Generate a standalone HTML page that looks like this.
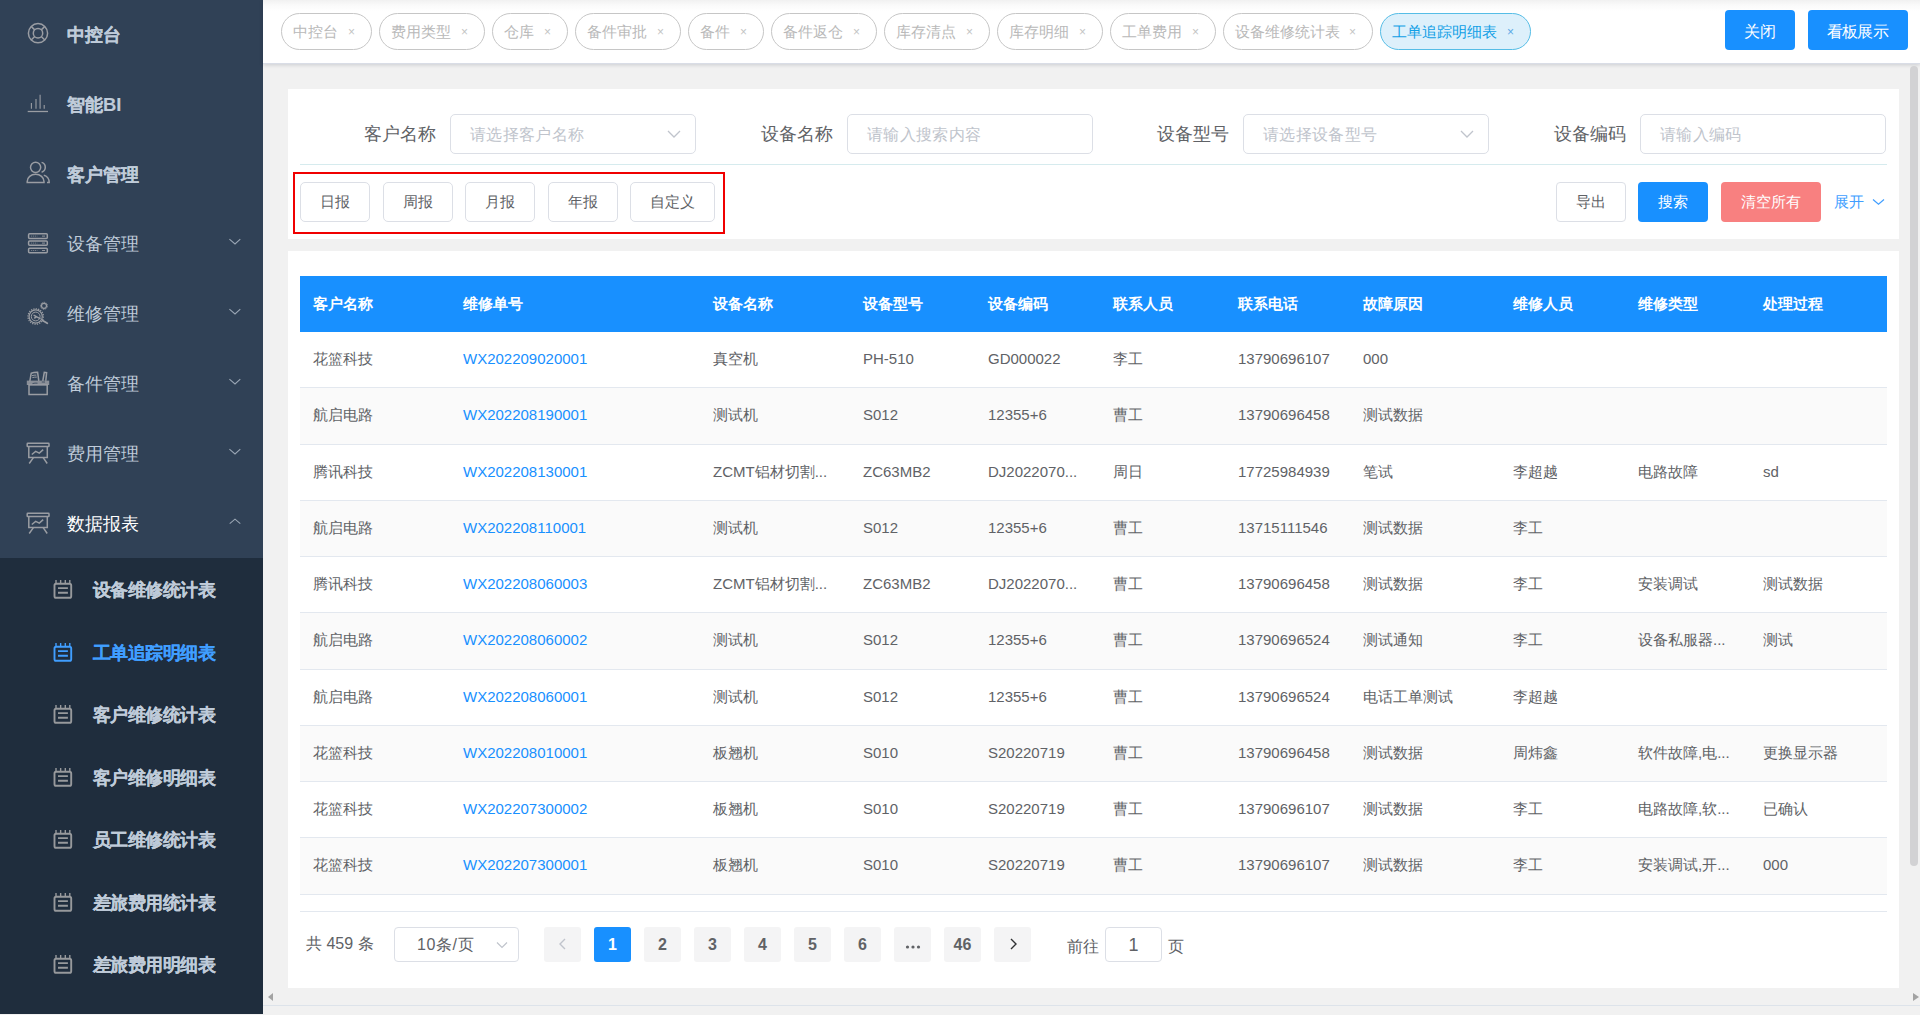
<!DOCTYPE html>
<html><head><meta charset="utf-8">
<style>
*{box-sizing:border-box;margin:0;padding:0}
html,body{width:1920px;height:1015px;overflow:hidden;background:#f1f1f1;font-family:"Liberation Sans",sans-serif;position:relative}
#side{position:absolute;left:0;top:0;width:263px;height:1014px;background:#304156;overflow:hidden}
.mi{position:absolute;left:0;width:263px;height:70px;color:#bfcbd9;font-size:18px}
.mi .t{position:absolute;left:67px;top:0.5px;line-height:70px;white-space:nowrap;font-size:18.4px}
.mi.b .t{font-weight:bold;top:1.5px;-webkit-text-stroke:0.12px currentColor}
.mi.open{color:#fff}
.mi svg{position:absolute}
.mi svg.arr{left:227.5px;top:30px}
#sub{position:absolute;left:0;top:558px;width:263px;height:456px;background:#1f2d3d}
.si{position:absolute;left:0;width:263px;height:62.5px;color:#bfcbd9;font-size:18px;font-weight:bold;letter-spacing:-0.5px;-webkit-text-stroke:0.12px currentColor}
.si .t{position:absolute;left:92.5px;top:1px;line-height:62.5px;white-space:nowrap}
.si svg{position:absolute}
.si.act{color:#409eff}
#hdr{position:absolute;left:263px;top:0;width:1657px;height:64px;background:linear-gradient(#f1f1f1 0,#fafafa 5px,#fff 11px);border-bottom:1px solid #d9dde6;box-shadow:0 1px 4px rgba(0,21,41,.16)}
.tag{position:absolute;top:13px;height:37px;border:1.3px solid #c6c6c6;border-radius:19px;color:#b9b9b9;font-size:15px;line-height:35px;padding-left:10.5px;white-space:nowrap}
.tag .x{position:absolute;right:16px;top:1px;font-size:12px}
.tag.on{background:#ddf0fb;border-color:#55bde6;color:#109fe6}
.tag.on .x{color:#5aa8e6}
.tag .x{color:#c4c4c4}
.btn{position:absolute;border-radius:4px;font-size:15px;text-align:center;white-space:nowrap}
.btn.pri{background:#1890ff;color:#fff;padding-top:1.5px}
.btn.red{background:#f88080;color:#fff}
.btn.plain{background:#fff;border:1px solid #dcdfe6;color:#606266;line-height:38px}
.card{position:absolute;background:#fff}
.lbl{position:absolute;top:114px;height:40px;line-height:40px;font-size:17.5px;color:#606266;text-align:right;white-space:nowrap}
.inp{position:absolute;top:114px;height:40px;border:1px solid #dcdfe6;border-radius:5px;font-size:16px;color:#c0c4cc;line-height:40px;padding-left:19px;letter-spacing:0.35px;white-space:nowrap;background:#fff}
.inp .dd{position:absolute;right:14px;top:15px}
.divl{position:absolute;height:1px;background:#d6ebee}
.redbox{position:absolute;left:293px;top:172px;width:432px;height:62px;border:2px solid #f00000}
.fb{position:absolute;top:182px;height:40px;border:1px solid #dcdfe6;border-radius:5px;font-size:15px;color:#606266;line-height:38px;text-align:center;background:#fff}
.expand{position:absolute;left:1834px;top:182px;height:40px;line-height:40px;font-size:15px;color:#409eff;white-space:nowrap}
.expand svg{margin-left:8px;vertical-align:middle;position:relative;top:-1.5px}
.thead{position:absolute;left:300px;top:276px;width:1587px;height:56px;background:#1890ff}
.thead span{position:absolute;top:0;line-height:56px;color:#fff;font-size:15px;font-weight:bold;white-space:nowrap}
.trow{position:absolute;left:300px;width:1587px;height:56.25px;border-bottom:1px solid #e3e8ef;background:#fff}
.trow.odd{background:#fafafa}
.trow span{position:absolute;top:0;line-height:54px;color:#606266;font-size:15px;white-space:nowrap}
.trow span.lnk{color:#1890ff}
.hline{position:absolute;left:300px;width:1587px;height:1px;background:#e3e8ef}
.total{position:absolute;left:306px;top:926px;height:36px;line-height:36px;font-size:16px;color:#606266}
.sizes{position:absolute;left:394px;top:927px;width:125px;height:35px;border:1px solid #dcdfe6;border-radius:4px;font-size:16px;color:#606266;line-height:34px;padding-left:22px;letter-spacing:0.6px}
.sizes svg{position:absolute;right:10px;top:13px}
.pg{position:absolute;top:927px;width:37px;height:35px;background:#f4f4f5;border-radius:3px;color:#606266;font-size:16px;font-weight:bold;text-align:center;line-height:35px}
.pg svg{margin-top:10px}
.pg.act{background:#1890ff;color:#fff}
.goto{position:absolute;left:1067px;top:928.5px;line-height:36px;font-size:16px;color:#606266}
.gotoin{position:absolute;left:1105px;top:927px;width:57px;height:35px;border:1px solid #dcdfe6;border-radius:4px;text-align:center;line-height:34px;font-size:18px;color:#606266}
.goto2{position:absolute;left:1167.5px;top:928.5px;line-height:36px;font-size:16px;color:#606266}
.vthumb{position:absolute;left:1910px;top:66px;width:8px;height:800px;border-radius:4px;background:#d2d2d4}
.hbar{position:absolute;left:263px;top:1005px;width:1657px;height:1px;background:#dde3ea}
.harr{position:absolute;top:993px}

</style></head><body>

<div id="side">
<div class="mi b" style="top:-2px">
<svg style="left:23px;top:20px" width="30" height="30" viewBox="0 0 30 30"><g stroke="#9a9da3" fill="none" stroke-width="1.5"><circle cx="15" cy="15.2" r="9.6"/><circle cx="15" cy="15.2" r="4.7"/><path d="M11.7 11.9 L8.2 8.4 M18.3 11.9 L21.8 8.4 M11.7 18.5 L8.2 22 M18.3 18.5 L21.8 22"/></g></svg>

<span class="t">中控台</span>
</div>
<div class="mi b" style="top:68px">
<svg style="left:23px;top:20px" width="30" height="30" viewBox="0 0 30 30"><g stroke="#9a9da3" fill="none" stroke-width="1.1"><path d="M8.4 15.1 V20.8 M13 11 V20.8 M17.1 6.8 V20.8 M21.2 16.9 V20.8"/><path d="M4.7 23.5 H25" stroke-width="1.3"/></g></svg>

<span class="t">智能BI</span>
</div>
<div class="mi b" style="top:138px">
<svg style="left:23px;top:20px" width="30" height="30" viewBox="0 0 30 30"><g stroke="#9a9da3" fill="none" stroke-width="1.5"><circle cx="12.6" cy="9.3" r="5.1"/><path d="M4.2 24.6 V23.5 A8.4 7.2 0 0 1 21 23.5 V24.6 Z"/><path d="M18.6 4.4 A5.1 5.1 0 0 1 18.6 14.2"/><path d="M20.8 17.2 A6.5 7.5 0 0 1 26.2 24.6 H24"/></g></svg>

<span class="t">客户管理</span>
</div>
<div class="mi" style="top:208px">
<svg style="left:23px;top:20px" width="30" height="30" viewBox="0 0 30 30"><g stroke="#9a9da3" fill="none" stroke-width="1.5"><rect x="5.6" y="5.8" width="18.7" height="4.6" rx="1"/><rect x="5.6" y="12.9" width="18.7" height="4.4" rx="1"/><rect x="5.6" y="20.3" width="18.7" height="4.4" rx="1"/></g><g stroke="#9a9da3" stroke-width="0.8" stroke-dasharray="1 1"><path d="M8.2 8.1 H14.5 M8.2 15.1 H14.5 M8.2 22.5 H14.5"/></g><g stroke="#9a9da3" stroke-width="0.9"><path d="M19 8.1 H22 M19 15.1 H22 M19 22.5 H22"/></g></svg>

<span class="t">设备管理</span>
<svg class="arr" width="14" height="8" viewBox="0 0 14 8"><path d="M1.4 1.2 L7 5.9 L12.3 1.2" fill="none" stroke="#9aa6b4" stroke-width="1.1"/></svg>
</div>
<div class="mi" style="top:278px">
<svg style="left:23px;top:20px" width="30" height="30" viewBox="0 0 30 30"><g stroke="#9a9da3" fill="none"><circle cx="12.7" cy="18.5" r="7.7" stroke-width="1.3" stroke-dasharray="1.3 1.1"/><circle cx="12.7" cy="18.5" r="6.6" stroke-width="1.2"/><circle cx="12.7" cy="18.5" r="4.4" stroke-width="1"/><path d="M10.6 17.2 L13.4 18.6 L11.3 20.4 M13.4 18.6 L17.5 20.8" stroke-width="1.5"/><circle cx="21" cy="7.8" r="3.5" stroke-width="1" stroke-dasharray="1 0.8"/><circle cx="21" cy="7.8" r="2.5" stroke-width="1.2"/><path d="M19.6 22.4 L24.3 25.3" stroke-width="1.8" stroke-linecap="round"/></g></svg>

<span class="t">维修管理</span>
<svg class="arr" width="14" height="8" viewBox="0 0 14 8"><path d="M1.4 1.2 L7 5.9 L12.3 1.2" fill="none" stroke="#9aa6b4" stroke-width="1.1"/></svg>
</div>
<div class="mi" style="top:348px">
<svg style="left:23px;top:20px" width="30" height="30" viewBox="0 0 30 30"><g stroke="#9a9da3" fill="none" stroke-width="1.5"><rect x="6" y="16.9" width="18.2" height="9.6"/><path d="M6.8 13.5 L8.2 5.2 Q11 4.2 14.6 4.3 L15.8 12.8" /><path d="M8.9 7.7 Q11 7 13.4 7.1 M9.4 9.6 Q11.5 9 13.8 9.1" stroke-width="1"/><path d="M19.8 12.8 L21.3 4.3 L23.6 4.6 L22.8 12.8"/></g><rect x="3.8" y="12.6" width="22.4" height="4.4" fill="#9a9da3" opacity="0.85"/><path d="M9.5 15.6 Q12 14.8 14.5 15.2 M18.8 14 L22 14" stroke="#3a4a5e" stroke-width="0.9" fill="none"/></svg>

<span class="t">备件管理</span>
<svg class="arr" width="14" height="8" viewBox="0 0 14 8"><path d="M1.4 1.2 L7 5.9 L12.3 1.2" fill="none" stroke="#9aa6b4" stroke-width="1.1"/></svg>
</div>
<div class="mi" style="top:418px">
<svg style="left:23px;top:20px" width="30" height="30" viewBox="0 0 30 30"><g stroke="#9a9da3" fill="none" stroke-width="1.5"><rect x="4.2" y="5.3" width="21.8" height="3.3" rx="0.6"/><path d="M5.8 8.6 V19.6 H24.3 V8.6"/><path d="M10.4 19.6 L6.2 25.5 M20.2 19.6 L24.2 25.5"/><path d="M8.8 16.5 L12.7 13.3 L16.3 15.1 L20.2 11.6"/></g></svg>

<span class="t">费用管理</span>
<svg class="arr" width="14" height="8" viewBox="0 0 14 8"><path d="M1.4 1.2 L7 5.9 L12.3 1.2" fill="none" stroke="#9aa6b4" stroke-width="1.1"/></svg>
</div>
<div class="mi open" style="top:488px">
<svg style="left:23px;top:20px" width="30" height="30" viewBox="0 0 30 30"><g stroke="#9a9da3" fill="none" stroke-width="1.5"><rect x="4.2" y="5.3" width="21.8" height="3.3" rx="0.6"/><path d="M5.8 8.6 V19.6 H24.3 V8.6"/><path d="M10.4 19.6 L6.2 25.5 M20.2 19.6 L24.2 25.5"/><path d="M8.8 16.5 L12.7 13.3 L16.3 15.1 L20.2 11.6"/></g></svg>

<span class="t">数据报表</span>
<svg class="arr" width="14" height="8" viewBox="0 0 14 8"><path d="M1.7 5.6 L7 1.2 L12.3 5.6" fill="none" stroke="#9aa6b4" stroke-width="1.1"/></svg>
</div>
<div id="sub">
<div class="si" style="top:0.0px">
<svg style="left:50px;top:20px" width="26" height="24" viewBox="0 0 26 24"><g stroke="#97999c" fill="none" stroke-width="1.9"><rect x="4.5" y="5.8" width="16.7" height="14" rx="1.6"/><path d="M8 10.1 H17.9 M8 14.7 H17.9"/></g><g stroke="#97999c" stroke-width="1.4"><path d="M6 2 V5 M10.65 2 V5 M15.3 2 V5 M19.8 2 V5"/></g></svg>

<span class="t">设备维修统计表</span></div>
<div class="si act" style="top:62.5px">
<svg style="left:50px;top:20px" width="26" height="24" viewBox="0 0 26 24"><g stroke="#409eff" fill="none" stroke-width="1.9"><rect x="4.5" y="5.8" width="16.7" height="14" rx="1.6"/><path d="M8 10.1 H17.9 M8 14.7 H17.9"/></g><g stroke="#409eff" stroke-width="1.4"><path d="M6 2 V5 M10.65 2 V5 M15.3 2 V5 M19.8 2 V5"/></g></svg>

<span class="t">工单追踪明细表</span></div>
<div class="si" style="top:125.0px">
<svg style="left:50px;top:20px" width="26" height="24" viewBox="0 0 26 24"><g stroke="#97999c" fill="none" stroke-width="1.9"><rect x="4.5" y="5.8" width="16.7" height="14" rx="1.6"/><path d="M8 10.1 H17.9 M8 14.7 H17.9"/></g><g stroke="#97999c" stroke-width="1.4"><path d="M6 2 V5 M10.65 2 V5 M15.3 2 V5 M19.8 2 V5"/></g></svg>

<span class="t">客户维修统计表</span></div>
<div class="si" style="top:187.5px">
<svg style="left:50px;top:20px" width="26" height="24" viewBox="0 0 26 24"><g stroke="#97999c" fill="none" stroke-width="1.9"><rect x="4.5" y="5.8" width="16.7" height="14" rx="1.6"/><path d="M8 10.1 H17.9 M8 14.7 H17.9"/></g><g stroke="#97999c" stroke-width="1.4"><path d="M6 2 V5 M10.65 2 V5 M15.3 2 V5 M19.8 2 V5"/></g></svg>

<span class="t">客户维修明细表</span></div>
<div class="si" style="top:250.0px">
<svg style="left:50px;top:20px" width="26" height="24" viewBox="0 0 26 24"><g stroke="#97999c" fill="none" stroke-width="1.9"><rect x="4.5" y="5.8" width="16.7" height="14" rx="1.6"/><path d="M8 10.1 H17.9 M8 14.7 H17.9"/></g><g stroke="#97999c" stroke-width="1.4"><path d="M6 2 V5 M10.65 2 V5 M15.3 2 V5 M19.8 2 V5"/></g></svg>

<span class="t">员工维修统计表</span></div>
<div class="si" style="top:312.5px">
<svg style="left:50px;top:20px" width="26" height="24" viewBox="0 0 26 24"><g stroke="#97999c" fill="none" stroke-width="1.9"><rect x="4.5" y="5.8" width="16.7" height="14" rx="1.6"/><path d="M8 10.1 H17.9 M8 14.7 H17.9"/></g><g stroke="#97999c" stroke-width="1.4"><path d="M6 2 V5 M10.65 2 V5 M15.3 2 V5 M19.8 2 V5"/></g></svg>

<span class="t">差旅费用统计表</span></div>
<div class="si" style="top:375.0px">
<svg style="left:50px;top:20px" width="26" height="24" viewBox="0 0 26 24"><g stroke="#97999c" fill="none" stroke-width="1.9"><rect x="4.5" y="5.8" width="16.7" height="14" rx="1.6"/><path d="M8 10.1 H17.9 M8 14.7 H17.9"/></g><g stroke="#97999c" stroke-width="1.4"><path d="M6 2 V5 M10.65 2 V5 M15.3 2 V5 M19.8 2 V5"/></g></svg>

<span class="t">差旅费用明细表</span></div>
</div></div>
<div id="hdr">
<div class="tag" style="left:18px;width:91px"><span class="tt">中控台</span><span class="x">×</span></div>
<div class="tag" style="left:116px;width:106px"><span class="tt">费用类型</span><span class="x">×</span></div>
<div class="tag" style="left:229px;width:76px"><span class="tt">仓库</span><span class="x">×</span></div>
<div class="tag" style="left:312px;width:106px"><span class="tt">备件审批</span><span class="x">×</span></div>
<div class="tag" style="left:425px;width:76px"><span class="tt">备件</span><span class="x">×</span></div>
<div class="tag" style="left:508px;width:106px"><span class="tt">备件返仓</span><span class="x">×</span></div>
<div class="tag" style="left:621px;width:106px"><span class="tt">库存清点</span><span class="x">×</span></div>
<div class="tag" style="left:734px;width:106px"><span class="tt">库存明细</span><span class="x">×</span></div>
<div class="tag" style="left:847px;width:106px"><span class="tt">工单费用</span><span class="x">×</span></div>
<div class="tag" style="left:960px;width:150px"><span class="tt">设备维修统计表</span><span class="x">×</span></div>
<div class="tag on" style="left:1117px;width:151px"><span class="tt">工单追踪明细表</span><span class="x">×</span></div>
<div class="btn pri" style="left:1462px;top:10px;width:70px;height:40px;line-height:40px;font-size:16px">关闭</div>
<div class="btn pri" style="left:1545px;top:10px;width:100px;height:40px;line-height:40px;font-size:16px;letter-spacing:-0.8px;text-indent:-1px">看板展示</div>
</div>
<div class="card" style="left:288px;top:89px;width:1611px;height:150px"></div>
<div class="card" style="left:288px;top:251px;width:1611px;height:737px"></div>
<div class="lbl" style="left:336px;width:100px">客户名称</div>
<div class="lbl" style="left:733px;width:100px">设备名称</div>
<div class="lbl" style="left:1129px;width:100px">设备型号</div>
<div class="lbl" style="left:1526px;width:100px">设备编码</div>
<div class="inp" style="left:450px;width:246px">请选择客户名称<svg class="dd" width="14" height="8" viewBox="0 0 14 8"><path d="M1 1 L7 7 L13 1" fill="none" stroke="#c0c4cc" stroke-width="1.3"/></svg></div>
<div class="inp" style="left:847px;width:246px">请输入搜索内容</div>
<div class="inp" style="left:1243px;width:246px">请选择设备型号<svg class="dd" width="14" height="8" viewBox="0 0 14 8"><path d="M1 1 L7 7 L13 1" fill="none" stroke="#c0c4cc" stroke-width="1.3"/></svg></div>
<div class="inp" style="left:1640px;width:246px">请输入编码</div>
<div class="divl" style="left:300px;top:164px;width:1587px"></div>
<div class="redbox"></div>
<div class="fb" style="left:300px;width:70px">日报</div>
<div class="fb" style="left:383px;width:70px">周报</div>
<div class="fb" style="left:465px;width:70px">月报</div>
<div class="fb" style="left:548px;width:70px">年报</div>
<div class="fb" style="left:630px;width:85px">自定义</div>
<div class="btn plain" style="left:1556px;top:182px;width:70px;height:40px">导出</div>
<div class="btn pri" style="left:1638px;top:182px;width:70px;height:40px;line-height:40px;padding-top:0">搜索</div>
<div class="btn red" style="left:1721px;top:182px;width:100px;height:40px;line-height:40px">清空所有</div>
<div class="expand">展开<svg width="13" height="8" viewBox="0 0 13 8"><path d="M1 1.5 L6.5 6.2 L12 1.5" fill="none" stroke="#409eff" stroke-width="1.2"/></svg></div>
<div class="thead">
<span style="left:13px">客户名称</span>
<span style="left:163px">维修单号</span>
<span style="left:413px">设备名称</span>
<span style="left:563px">设备型号</span>
<span style="left:688px">设备编码</span>
<span style="left:813px">联系人员</span>
<span style="left:938px">联系电话</span>
<span style="left:1063px">故障原因</span>
<span style="left:1213px">维修人员</span>
<span style="left:1338px">维修类型</span>
<span style="left:1463px">处理过程</span>
</div>
<div class="trow" style="top:332.0px">
<span style="left:13px">花篮科技</span>
<span class="lnk" style="left:163px">WX202209020001</span>
<span style="left:413px">真空机</span>
<span style="left:563px">PH-510</span>
<span style="left:688px">GD000022</span>
<span style="left:813px">李工</span>
<span style="left:938px">13790696107</span>
<span style="left:1063px">000</span>
<span style="left:1213px"></span>
<span style="left:1338px"></span>
<span style="left:1463px"></span>
</div>
<div class="trow odd" style="top:388.25px">
<span style="left:13px">航启电路</span>
<span class="lnk" style="left:163px">WX202208190001</span>
<span style="left:413px">测试机</span>
<span style="left:563px">S012</span>
<span style="left:688px">12355+6</span>
<span style="left:813px">曹工</span>
<span style="left:938px">13790696458</span>
<span style="left:1063px">测试数据</span>
<span style="left:1213px"></span>
<span style="left:1338px"></span>
<span style="left:1463px"></span>
</div>
<div class="trow" style="top:444.5px">
<span style="left:13px">腾讯科技</span>
<span class="lnk" style="left:163px">WX202208130001</span>
<span style="left:413px">ZCMT铝材切割...</span>
<span style="left:563px">ZC63MB2</span>
<span style="left:688px">DJ2022070...</span>
<span style="left:813px">周日</span>
<span style="left:938px">17725984939</span>
<span style="left:1063px">笔试</span>
<span style="left:1213px">李超越</span>
<span style="left:1338px">电路故障</span>
<span style="left:1463px">sd</span>
</div>
<div class="trow odd" style="top:500.75px">
<span style="left:13px">航启电路</span>
<span class="lnk" style="left:163px">WX202208110001</span>
<span style="left:413px">测试机</span>
<span style="left:563px">S012</span>
<span style="left:688px">12355+6</span>
<span style="left:813px">曹工</span>
<span style="left:938px">13715111546</span>
<span style="left:1063px">测试数据</span>
<span style="left:1213px">李工</span>
<span style="left:1338px"></span>
<span style="left:1463px"></span>
</div>
<div class="trow" style="top:557.0px">
<span style="left:13px">腾讯科技</span>
<span class="lnk" style="left:163px">WX202208060003</span>
<span style="left:413px">ZCMT铝材切割...</span>
<span style="left:563px">ZC63MB2</span>
<span style="left:688px">DJ2022070...</span>
<span style="left:813px">曹工</span>
<span style="left:938px">13790696458</span>
<span style="left:1063px">测试数据</span>
<span style="left:1213px">李工</span>
<span style="left:1338px">安装调试</span>
<span style="left:1463px">测试数据</span>
</div>
<div class="trow odd" style="top:613.25px">
<span style="left:13px">航启电路</span>
<span class="lnk" style="left:163px">WX202208060002</span>
<span style="left:413px">测试机</span>
<span style="left:563px">S012</span>
<span style="left:688px">12355+6</span>
<span style="left:813px">曹工</span>
<span style="left:938px">13790696524</span>
<span style="left:1063px">测试通知</span>
<span style="left:1213px">李工</span>
<span style="left:1338px">设备私服器...</span>
<span style="left:1463px">测试</span>
</div>
<div class="trow" style="top:669.5px">
<span style="left:13px">航启电路</span>
<span class="lnk" style="left:163px">WX202208060001</span>
<span style="left:413px">测试机</span>
<span style="left:563px">S012</span>
<span style="left:688px">12355+6</span>
<span style="left:813px">曹工</span>
<span style="left:938px">13790696524</span>
<span style="left:1063px">电话工单测试</span>
<span style="left:1213px">李超越</span>
<span style="left:1338px"></span>
<span style="left:1463px"></span>
</div>
<div class="trow odd" style="top:725.75px">
<span style="left:13px">花篮科技</span>
<span class="lnk" style="left:163px">WX202208010001</span>
<span style="left:413px">板翘机</span>
<span style="left:563px">S010</span>
<span style="left:688px">S20220719</span>
<span style="left:813px">曹工</span>
<span style="left:938px">13790696458</span>
<span style="left:1063px">测试数据</span>
<span style="left:1213px">周炜鑫</span>
<span style="left:1338px">软件故障,电...</span>
<span style="left:1463px">更换显示器</span>
</div>
<div class="trow" style="top:782.0px">
<span style="left:13px">花篮科技</span>
<span class="lnk" style="left:163px">WX202207300002</span>
<span style="left:413px">板翘机</span>
<span style="left:563px">S010</span>
<span style="left:688px">S20220719</span>
<span style="left:813px">曹工</span>
<span style="left:938px">13790696107</span>
<span style="left:1063px">测试数据</span>
<span style="left:1213px">李工</span>
<span style="left:1338px">电路故障,软...</span>
<span style="left:1463px">已确认</span>
</div>
<div class="trow odd" style="top:838.25px">
<span style="left:13px">花篮科技</span>
<span class="lnk" style="left:163px">WX202207300001</span>
<span style="left:413px">板翘机</span>
<span style="left:563px">S010</span>
<span style="left:688px">S20220719</span>
<span style="left:813px">曹工</span>
<span style="left:938px">13790696107</span>
<span style="left:1063px">测试数据</span>
<span style="left:1213px">李工</span>
<span style="left:1338px">安装调试,开...</span>
<span style="left:1463px">000</span>
</div>
<div class="hline" style="top:911px"></div>
<div class="total">共 459 条</div>
<div class="sizes">10条/页<svg width="12" height="8" viewBox="0 0 12 8"><path d="M1 1.5 L6 6.5 L11 1.5" fill="none" stroke="#c0c4cc" stroke-width="1.2"/></svg></div>
<div class="pg" style="left:544px"><svg width="10" height="14" viewBox="0 0 10 14"><path d="M7 2 L2 7 L7 12" fill="none" stroke="#c0c4cc" stroke-width="1.4"/></svg></div>
<div class="pg act" style="left:594px">1</div>
<div class="pg" style="left:644px">2</div>
<div class="pg" style="left:694px">3</div>
<div class="pg" style="left:744px">4</div>
<div class="pg" style="left:794px">5</div>
<div class="pg" style="left:844px">6</div>
<div class="pg" style="left:894px"><svg width="16" height="6" viewBox="0 0 16 6" style="margin-top:14px"><circle cx="2.5" cy="3" r="1.6" fill="#606266"/><circle cx="8" cy="3" r="1.6" fill="#606266"/><circle cx="13.5" cy="3" r="1.6" fill="#606266"/></svg></div>
<div class="pg" style="left:944px">46</div>
<div class="pg" style="left:994px"><svg width="10" height="14" viewBox="0 0 10 14"><path d="M3 2 L8 7 L3 12" fill="none" stroke="#303133" stroke-width="1.4"/></svg></div>
<div class="goto">前往</div><div class="gotoin">1</div><div class="goto2">页</div>
<div class="vthumb"></div>
<div class="hbar"></div>
<svg class="harr" style="left:268px" width="6" height="8" viewBox="0 0 6 8"><path d="M5 0 L0 4 L5 8Z" fill="#a3a3a3"/></svg>
<svg class="harr" style="left:1913px" width="6" height="8" viewBox="0 0 6 8"><path d="M0 0 L6 4 L0 8Z" fill="#a3a3a3"/></svg>
</body></html>
